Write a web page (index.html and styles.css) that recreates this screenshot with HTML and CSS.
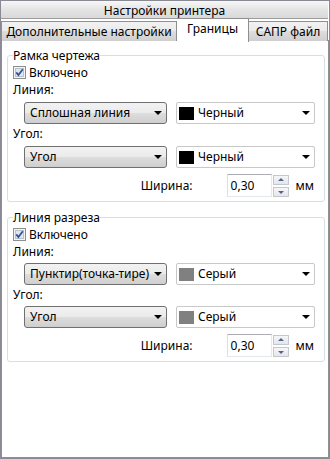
FILE: index.html
```html
<!DOCTYPE html>
<html lang="ru">
<head>
    <meta charset="UTF-8">
    <title>Настройки принтера</title>
    <link rel="stylesheet" href="styles.css">
</head>
<body>
    <div class="window">
        <div class="title">Настройки принтера</div>

        <div class="tabs">
            <div class="tab tab-wide">Дополнительные настройки</div>
            <div class="tab active">Границы</div>
            <div class="tab tab-cad">САПР файл</div>
        </div>

        <div class="panel">
            <fieldset class="group">
                <legend>Рамка чертежа</legend>
                <div class="check">
                    <svg class="box" width="13" height="13" viewBox="0 0 13 13">
                        <rect x="0.5" y="0.5" width="12" height="12" fill="#f4f4f4" stroke="#8e8f8f"/>
                        <rect x="2.5" y="2.5" width="8" height="8" fill="#dfe6ef" stroke="#b7c0cb"/>
                        <path d="M3.3 6.4 L5.4 9 L9.8 3.2" fill="none" stroke="#2f4f98" stroke-width="1.7"/>
                    </svg>
                    Включено
                </div>
                <div class="caption">Линия:</div>
                <div class="row">
                    <div class="combo">Сплошная линия<span class="arrow"></span></div>
                    <div class="color-combo"><span class="swatch"></span>Черный<span class="arrow"></span></div>
                </div>
                <div class="caption">Угол:</div>
                <div class="row">
                    <div class="combo">Угол<span class="arrow"></span></div>
                    <div class="color-combo"><span class="swatch"></span>Черный<span class="arrow"></span></div>
                </div>
                <div class="width-row">
                    <span class="width-label">Ширина:</span>
                    <div class="spin-input">0,30</div>
                    <div class="spin-btns">
                        <span class="spin up"></span>
                        <span class="spin down"></span>
                    </div>
                    <span class="unit">мм</span>
                </div>
            </fieldset>

            <fieldset class="group second">
                <legend>Линия разреза</legend>
                <div class="check">
                    <svg class="box" width="13" height="13" viewBox="0 0 13 13">
                        <rect x="0.5" y="0.5" width="12" height="12" fill="#f4f4f4" stroke="#8e8f8f"/>
                        <rect x="2.5" y="2.5" width="8" height="8" fill="#dfe6ef" stroke="#b7c0cb"/>
                        <path d="M3.3 6.4 L5.4 9 L9.8 3.2" fill="none" stroke="#2f4f98" stroke-width="1.7"/>
                    </svg>
                    Включено
                </div>
                <div class="caption">Линия:</div>
                <div class="row">
                    <div class="combo">Пунктир(точка-тире)<span class="arrow"></span></div>
                    <div class="color-combo"><span class="swatch gray"></span>Серый<span class="arrow"></span></div>
                </div>
                <div class="caption">Угол:</div>
                <div class="row">
                    <div class="combo">Угол<span class="arrow"></span></div>
                    <div class="color-combo"><span class="swatch gray"></span>Серый<span class="arrow"></span></div>
                </div>
                <div class="width-row">
                    <span class="width-label">Ширина:</span>
                    <div class="spin-input">0,30</div>
                    <div class="spin-btns">
                        <span class="spin up"></span>
                        <span class="spin down"></span>
                    </div>
                    <span class="unit">мм</span>
                </div>
            </fieldset>
        </div>
    </div>
</body>
</html>
```

FILE: styles.css
```css
* {
    box-sizing: border-box;
}

body {
    margin: 0;
    font-family: "Noto Sans", "Open Sans", sans-serif;
    font-size: 12px;
    line-height: 15px;
    color: #000;
    background: #fff;
}

.window {
    width: 330px;
    height: 459px;
    border: 1px solid #8a8a94;
    display: flex;
    flex-direction: column;
    background: #fff;
}

.title {
    height: 18px;
    margin-right: 1px;
    border-bottom: 1px solid #9c9c9c;
    background: linear-gradient(#f7f7f7, #e4e4e4 50%, #d9d9d9);
    text-align: center;
    line-height: 19px;
}

.tabs {
    display: flex;
    height: 21px;
    margin-right: 1px;
    position: relative;
    z-index: 1;
}

.tab {
    margin-top: 2px;
    height: 20px;
    border: 1px solid #8e8f8f;
    border-bottom: none;
    background: linear-gradient(#f2f2f2, #ebebeb 45%, #dddddd 50%, #cfcfcf);
    text-align: center;
    line-height: 19px;
}

.tab-wide {
    width: 176px;
}

.tab-cad {
    flex: 1;
    border-left: none;
}

.tab.active {
    width: 72px;
    margin-top: -1px;
    height: 24px;
    background: #fff;
    line-height: 20px;
    border-left: none;
}

.panel {
    flex: 1;
    border: 1px solid #8e8f8f;
    padding: 7px 3px 0 5px;
    background: #fff;
}

.group {
    margin: 0;
    min-width: 0;
    border: 1px solid #d5dfe5;
    border-radius: 3px;
    padding: 0 9px 4px 5px;
}

.group.second {
    margin-top: 8px;
}

.group legend {
    padding: 0;
    line-height: 15px;
}

.check {
    display: flex;
    align-items: center;
    gap: 3px;
    margin-top: 2px;
    height: 15px;
}

.caption {
    margin-top: 2px;
}

.row {
    display: flex;
    gap: 9px;
    margin: 5px 0 0 11px;
}

.second .row {
    margin-top: 4px;
}

.combo,
.color-combo {
    position: relative;
    height: 22px;
    line-height: 20px;
    display: flex;
    align-items: center;
}

.combo {
    width: 143px;
    padding-left: 5px;
    border: 1px solid #707070;
    border-radius: 3px;
    background: linear-gradient(#f2f2f2, #ebebeb 48%, #dddddd 52%, #cfcfcf);
}

.color-combo {
    flex: 1;
    padding-left: 2px;
    border: 1px solid #c8c8c8;
    border-radius: 2px;
    background: #fff;
}

.swatch {
    width: 15px;
    height: 13px;
    margin-right: 4px;
    background: #000;
}

.swatch.gray {
    background: #808080;
}

.arrow {
    position: absolute;
    right: 4px;
    top: 8px;
    border-left: 4px solid transparent;
    border-right: 4px solid transparent;
    border-top: 4px solid #000;
}

.width-row {
    display: flex;
    justify-content: flex-end;
    align-items: center;
    margin: 6px 1px 0 0;
    height: 23px;
}

.width-label {
    margin-right: 34px;
}

.spin-input {
    width: 45px;
    height: 23px;
    padding: 3px 0 0 3px;
    border: 1px solid #e3e9ef;
    border-top-color: #abadb3;
    border-left-color: #dbdfe6;
}

.spin-btns {
    display: flex;
    flex-direction: column;
    gap: 2px;
    margin-left: 1px;
}

.spin {
    position: relative;
    width: 16px;
    height: 10px;
    border: 1px solid #c3c7cf;
    background: linear-gradient(#f6f7f9, #e3e6ec);
}

.spin::after {
    content: "";
    position: absolute;
    left: 4px;
    border-left: 3px solid transparent;
    border-right: 3px solid transparent;
}

.spin.up::after {
    top: 2px;
    border-bottom: 3px solid #56648a;
}

.spin.down::after {
    top: 3px;
    border-top: 3px solid #56648a;
}

.unit {
    margin-left: 7px;
}
```
